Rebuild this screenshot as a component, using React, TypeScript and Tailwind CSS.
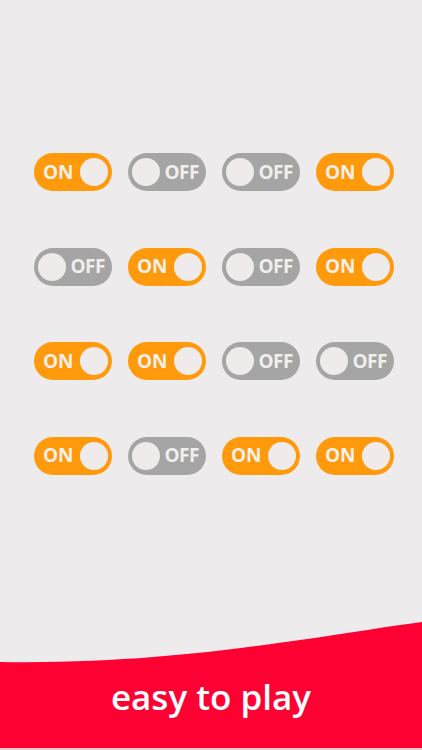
const ROWS: boolean[][] = [
  [true, false, false, true],
  [false, true, false, true],
  [true, true, false, false],
  [true, false, true, true],
];

function Toggle({ on }: { on: boolean }) {
  if (on) {
    return (
      <div className="flex h-[38px] w-[78px] items-center justify-between rounded-full bg-[#fe9a0c] pl-[9px] pr-[4px]">
        <span className="text-[19px] font-bold leading-none text-[#f7efe9]">ON</span>
        <span className="h-[28px] w-[28px] rounded-full bg-[#efebea]" />
      </div>
    );
  }
  return (
    <div className="flex h-[38px] w-[78px] items-center justify-between rounded-full bg-[#a5a5a5] pl-[4px] pr-[7px]">
      <span className="h-[28px] w-[28px] rounded-full bg-[#efebea]" />
      <span className="text-[19px] font-bold leading-none tracking-tight text-[#f2eeec]">OFF</span>
    </div>
  );
}

export default function App() {
  return (
    <div
      className="flex h-[750px] w-full flex-col overflow-hidden bg-[#eeebec]"
      style={{ fontFamily: '"Open Sans", "Liberation Sans", sans-serif' }}
    >
      <div className="flex flex-1 flex-col gap-[56.5px] pl-[34px] pt-[153px]">
        {ROWS.map((row, i) => (
          <div key={i} className="flex gap-[16px]">
            {row.map((on, j) => (
              <Toggle key={j} on={on} />
            ))}
          </div>
        ))}
      </div>
      <div className="flex flex-col">
        <svg viewBox="0 0 422 44" width="422" height="44" className="block w-full" preserveAspectRatio="none">
          <path d="M0 42 C 130 44, 230 30, 300 20 C 350 13, 390 6, 422 2 L 422 44 L 0 44 Z" fill="#ff0033" />
        </svg>
        <div className="flex h-[84px] items-start justify-center bg-[#ff0033] pt-[15px]">
          <span className="text-[35px] font-semibold leading-none text-white">easy to play</span>
        </div>
        <div className="h-[2px] bg-[#f2c9d0]" />
      </div>
    </div>
  );
}
